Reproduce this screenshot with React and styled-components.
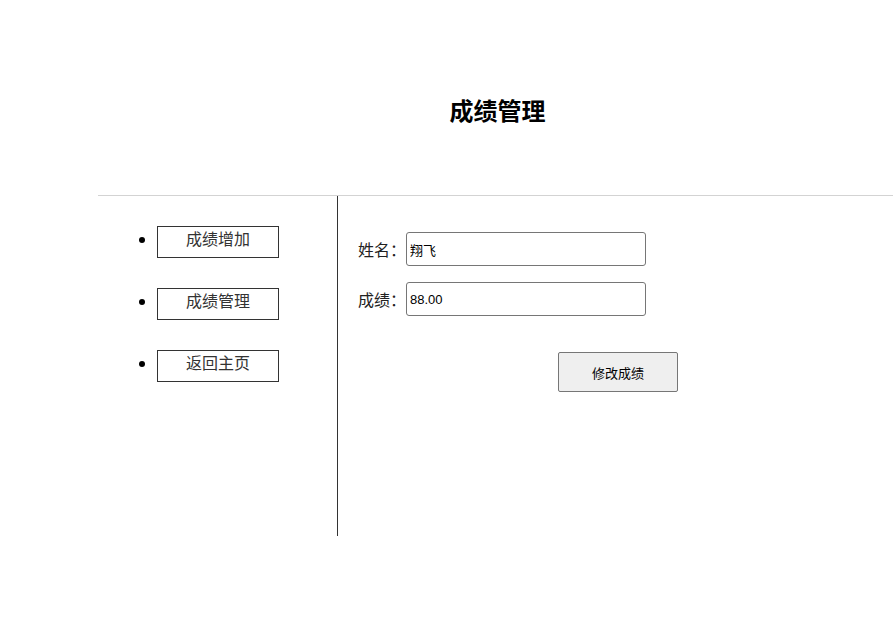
import React from "react";
import styled, { createGlobalStyle } from "styled-components";

const Global = createGlobalStyle`
  html, body { margin: 0; padding: 0; background: #fff; }
  body { font-family: "Liberation Sans", "Noto Sans CJK SC", sans-serif; color: #000; }
`;

const Page = styled.div`
  margin-left: 98px;
  width: 795px;
  height: 643px;
`;

const Header = styled.header`
  height: 196px;
  border-bottom: 1px solid #d3d3d3;
  box-sizing: border-box;
  padding: 96px 0 0 4px;
  text-align: center;
`;

const Title = styled.h1`
  margin: 0;
  font-size: 24px;
  line-height: 32px;
  font-weight: bold;
`;

const Body = styled.div`
  display: flex;
  height: 340px;
`;

const Sidebar = styled.nav`
  width: 240px;
  border-right: 1px solid #333;
  box-sizing: border-box;
`;

const Menu = styled.ul`
  margin: 0;
  padding: 27px 0 0 59px;
  list-style: disc;
`;

const MenuItem = styled.li`
  margin-bottom: 30px;
  height: 32px;
  line-height: 32px;
  font-size: 16px;
  &::marker { font-size: 19px; }
`;

const MenuButton = styled.a`
  display: inline-block;
  box-sizing: border-box;
  width: 122px;
  height: 32px;
  line-height: 26px;
  padding-bottom: 4px;
  border: 1px solid #333;
  color: #333;
  font-size: 16px;
  text-align: center;
  text-decoration: none;
  cursor: pointer;
`;

const Content = styled.main`
  flex: 1;
  padding: 36px 0 0 20px;
`;

const Row = styled.div`
  display: flex;
  align-items: center;
  margin-bottom: 16px;
`;

const Label = styled.label`
  width: 48px;
  font-size: 16px;
  color: #222;
`;

const Input = styled.input`
  box-sizing: border-box;
  width: 240px;
  height: 34px;
  border: 1px solid #767676;
  border-radius: 3px;
  padding: 1px 3px;
  font-family: "Liberation Sans", "Noto Sans CJK SC", sans-serif;
  font-size: 13px;
  color: #000;
  background: #fff;
  outline: none;
`;

const Submit = styled.button`
  margin: 20px 0 0 200px;
  box-sizing: border-box;
  width: 120px;
  height: 40px;
  background: #efefef;
  border: 1px solid #767676;
  border-radius: 2px;
  font-family: "Liberation Sans", "Noto Sans CJK SC", sans-serif;
  font-size: 13px;
  color: #000;
`;

export default function App() {
  return (
    <>
      <Global />
      <Page>
        <Header>
          <Title>成绩管理</Title>
        </Header>
        <Body>
          <Sidebar>
            <Menu>
              <MenuItem><MenuButton>成绩增加</MenuButton></MenuItem>
              <MenuItem><MenuButton>成绩管理</MenuButton></MenuItem>
              <MenuItem><MenuButton>返回主页</MenuButton></MenuItem>
            </Menu>
          </Sidebar>
          <Content>
            <Row>
              <Label>姓名：</Label>
              <Input defaultValue="翔飞" />
            </Row>
            <Row>
              <Label>成绩：</Label>
              <Input defaultValue="88.00" />
            </Row>
            <Submit>修改成绩</Submit>
          </Content>
        </Body>
      </Page>
    </>
  );
}
